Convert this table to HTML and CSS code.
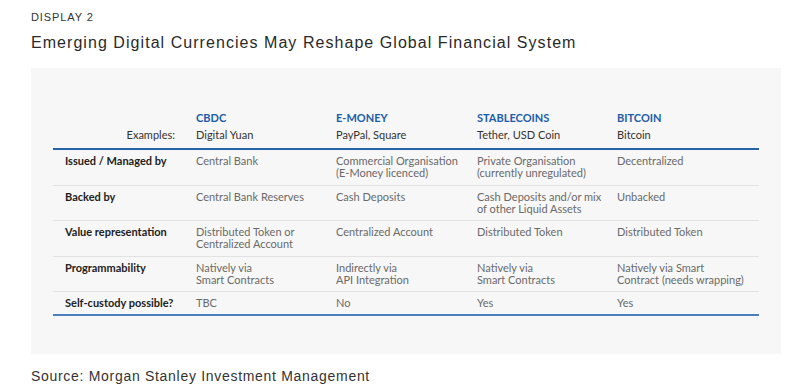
FILE: index.html
```html
<!DOCTYPE html>
<html>
<head>
<meta charset="utf-8">
<link rel="stylesheet" href="styles.css">
</head>
<body>
<div class="page">
  <div class="eyebrow">DISPLAY 2</div>
  <h1 class="title">Emerging Digital Currencies May Reshape Global Financial System</h1>
  <div class="panel">
    <div class="table">
      <div class="row head">
        <div class="cell label ex">Examples:</div>
        <div class="cell"><div class="hname">CBDC</div><div class="hex">Digital Yuan</div></div>
        <div class="cell"><div class="hname">E-MONEY</div><div class="hex">PayPal, Square</div></div>
        <div class="cell"><div class="hname">STABLECOINS</div><div class="hex">Tether, USD Coin</div></div>
        <div class="cell"><div class="hname">BITCOIN</div><div class="hex">Bitcoin</div></div>
      </div>
      <div class="row">
        <div class="cell label">Issued / Managed by</div>
        <div class="cell">Central Bank</div>
        <div class="cell">Commercial Organisation<br>(E-Money licenced)</div>
        <div class="cell">Private Organisation<br>(currently unregulated)</div>
        <div class="cell">Decentralized</div>
      </div>
      <div class="row">
        <div class="cell label">Backed by</div>
        <div class="cell">Central Bank Reserves</div>
        <div class="cell">Cash Deposits</div>
        <div class="cell">Cash Deposits and/or mix<br>of other Liquid Assets</div>
        <div class="cell">Unbacked</div>
      </div>
      <div class="row">
        <div class="cell label">Value representation</div>
        <div class="cell">Distributed Token or<br>Centralized Account</div>
        <div class="cell">Centralized Account</div>
        <div class="cell">Distributed Token</div>
        <div class="cell">Distributed Token</div>
      </div>
      <div class="row">
        <div class="cell label">Programmability</div>
        <div class="cell">Natively via<br>Smart Contracts</div>
        <div class="cell">Indirectly via<br>API Integration</div>
        <div class="cell">Natively via<br>Smart Contracts</div>
        <div class="cell">Natively via Smart<br>Contract (needs wrapping)</div>
      </div>
      <div class="row last">
        <div class="cell label">Self-custody possible?</div>
        <div class="cell">TBC</div>
        <div class="cell">No</div>
        <div class="cell">Yes</div>
        <div class="cell">Yes</div>
      </div>
    </div>
  </div>
  <div class="source">Source: Morgan Stanley Investment Management</div>
</div>
</body>
</html>
```
FILE: styles.css
```css
html, body {
  margin: 0;
  padding: 0;
  background: #ffffff;
}
.page {
  width: 798px;
  height: 390px;
  box-sizing: border-box;
  padding: 10px 17px 0 31px;
  font-family: "Liberation Sans", Arial, sans-serif;
  color: #333;
}
.eyebrow {
  font-size: 11px;
  letter-spacing: 0.9px;
  line-height: 14px;
  color: #333;
}
.title {
  margin: 9px 0 0 0;
  font-size: 16px;
  font-weight: normal;
  letter-spacing: 1.05px;
  line-height: 20px;
  color: #2a2a2a;
}
.panel {
  margin-top: 15px;
  height: 286px;
  background: #f7f7f7;
  box-sizing: border-box;
  padding: 41px 22px 0 22px;
}
.table {
  font-family: Lato, "Open Sans", sans-serif;
  font-size: 11px;
  line-height: 12px;
  border-bottom: 2px solid #4a80bc;
}
.row {
  display: grid;
  grid-template-columns: 143px 140px 141px 140px 1fr;
  border-bottom: 1px solid #e2e2e2;
}
.row.last {
  border-bottom: none;
}
.row.head {
  border-bottom: 2px solid #2563a8;
}
.cell {
  padding: 5px 0 5px 0;
  min-height: 24.5px;
  color: #6a6a6a;
}
.row.last .cell {
  min-height: 12px;
}
.label {
  padding-left: 12px;
  font-weight: bold;
  color: #222;
}
.head .cell {
  padding: 0 0 5px 0;
  min-height: 0;
  line-height: 17px;
}
.head .ex {
  font-weight: normal;
  color: #333;
  text-align: right;
  padding-right: 21px;
  align-self: end;
}
.hname {
  color: #1d5ca8;
  font-weight: bold;
}
.hex {
  color: #333;
}
.source {
  margin-top: 13px;
  font-size: 14px;
  letter-spacing: 0.7px;
  line-height: 18px;
  color: #333;
}
```
